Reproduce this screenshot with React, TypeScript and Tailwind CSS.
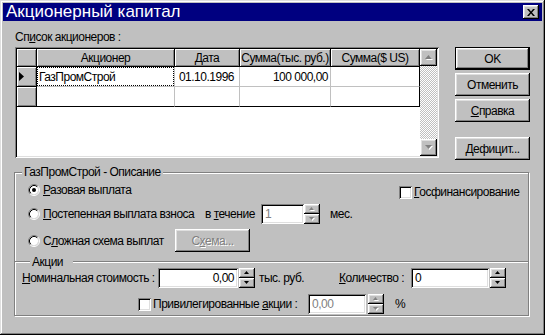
import React from 'react';

const raised =
  'shadow-[inset_-1px_-1px_0_#000,inset_1px_1px_0_#fff,inset_-2px_-2px_0_#808080,inset_2px_2px_0_#dfdfdf]';
const sunken =
  'shadow-[inset_1px_1px_0_#808080,inset_-1px_-1px_0_#fff,inset_2px_2px_0_#000,inset_-2px_-2px_0_#dfdfdf]';
const cellRaised = 'shadow-[inset_1px_1px_0_#fff,inset_-1px_-1px_0_#808080]';
const etched = 'h-[2px] border-y border-t-[#808080] border-b-white';
const grayText = 'text-[#808080] [text-shadow:1px_1px_0_#fff]';

const Arrow = ({ up, disabled, w = 5, h = 3 }: { up?: boolean; disabled?: boolean; w?: number; h?: number }) => {
  const pts = (dx: number, dy: number) =>
    up
      ? `${dx},${h + dy} ${w + dx},${h + dy} ${w / 2 + dx},${dy}`
      : `${dx},${dy} ${w + dx},${dy} ${w / 2 + dx},${h + dy}`;
  return (
    <svg width={w + 1} height={h + 1} viewBox={`0 0 ${w + 1} ${h + 1}`} className="block">
      {disabled && <polygon points={pts(1, 1)} fill="#fff" />}
      <polygon points={pts(0, 0)} fill={disabled ? '#808080' : '#000'} />
    </svg>
  );
};

const Radio = ({ checked }: { checked?: boolean }) => (
  <svg width="12" height="12" viewBox="0 0 12 12" className="shrink-0">
    <circle cx="6" cy="6" r="4.2" fill="#fff" />
    <path d="M2.11 9.89 A5.5 5.5 0 0 1 9.89 2.11" stroke="#808080" fill="none" />
    <path d="M9.89 2.11 A5.5 5.5 0 0 1 2.11 9.89" stroke="#fff" fill="none" />
    <path d="M2.82 9.18 A4.5 4.5 0 0 1 9.18 2.82" stroke="#000" fill="none" />
    <path d="M9.18 2.82 A4.5 4.5 0 0 1 2.82 9.18" stroke="#dfdfdf" fill="none" />
    {checked && <circle cx="6" cy="6" r="2" fill="#000" />}
  </svg>
);

const Check = () => <div className={`w-[13px] h-[13px] shrink-0 bg-white ${sunken}`} />;

const Spin = ({ disabled, className = '' }: { disabled?: boolean; className?: string }) => (
  <div className={`w-[16px] h-[20px] flex flex-col shrink-0 ${className}`}>
    <div className={`h-[10px] bg-[#c0c0c0] flex items-center justify-center ${raised}`}>
      <Arrow up disabled={disabled} />
    </div>
    <div className={`h-[10px] bg-[#c0c0c0] flex items-center justify-center ${raised}`}>
      <Arrow disabled={disabled} />
    </div>
  </div>
);

const Edit = ({ value, className, right, disabled }: { value: string; className: string; right?: boolean; disabled?: boolean }) => (
  <div
    className={`${className} h-[20px] shrink-0 bg-white flex items-center px-[4px] ${sunken} ${right ? 'justify-end' : ''} ${
      disabled ? 'text-[#808080]' : ''
    }`}
  >
    {value}
  </div>
);

const Button = ({ children, isDefault, disabled, className = '' }: { children: React.ReactNode; isDefault?: boolean; disabled?: boolean; className?: string }) => (
  <div
    className={`w-[75px] h-[23px] flex items-center justify-center bg-[#c0c0c0] ${raised} ${
      isDefault ? 'border border-black' : ''
    } ${disabled ? grayText : ''} ${className}`}
  >
    <span>{children}</span>
  </div>
);

const cols = ['w-[138px]', 'w-[65px]', 'w-[91px]', 'w-[89px]'];
const headers = ['Акционер', 'Дата', 'Сумма(тыс. руб.)', 'Сумма($ US)'];

const Grid = () => (
  <div className={`mt-[3px] h-[111px] p-[2px] bg-white flex ${sunken}`}>
    <div className="w-[403px] flex flex-col">
      {/* header */}
      <div className="flex h-[18px]">
        <div className={`w-[20px] bg-[#c0c0c0] border-r border-b border-black ${cellRaised}`} />
        {headers.map((h, i) => (
          <div
            key={h}
            className={`${cols[i]} bg-[#c0c0c0] border-r border-b border-black flex items-center justify-center whitespace-nowrap overflow-hidden ${cellRaised}`}
          >
            {h}
          </div>
        ))}
      </div>
      {/* row 1 */}
      <div className="flex h-[20px]">
        <div className={`w-[20px] bg-[#c0c0c0] border-r border-b border-black flex items-center pl-[2px] ${cellRaised}`}>
          <svg width="5" height="9" viewBox="0 0 5 9">
            <polygon points="0,0 5,4.5 0,9" fill="#000" />
          </svg>
        </div>
        <div className="w-[138px] border-r border-b border-[#c0c0c0]">
          <div className="h-full border border-dotted border-black flex items-center pl-[1px]">ГазПромСтрой</div>
        </div>
        <div className="w-[65px] border-r border-b border-[#c0c0c0] flex items-center justify-end pr-[5px]">01.10.1996</div>
        <div className="w-[91px] border-r border-b border-[#c0c0c0] flex items-center justify-end pr-[2px]">100 000,00</div>
        <div className="w-[89px] border-r border-b border-[#c0c0c0] border-r-black" />
      </div>
      {/* row 2 */}
      <div className="flex h-[20px]">
        <div className={`w-[20px] bg-[#c0c0c0] border-r border-b border-black ${cellRaised}`} />
        <div className="w-[138px] border-r border-b border-[#c0c0c0] border-b-black" />
        <div className="w-[65px] border-r border-b border-[#c0c0c0] border-b-black" />
        <div className="w-[91px] border-r border-b border-[#c0c0c0] border-b-black" />
        <div className="w-[89px] border-r border-b border-black" />
      </div>
    </div>
    {/* scrollbar */}
    <div className="w-[17px] flex flex-col">
      <div className={`h-[17px] bg-[#c0c0c0] flex items-center justify-center ${raised}`}>
        <Arrow up disabled w={7} h={4} />
      </div>
      <div className="flex-1 bg-[repeating-conic-gradient(#c0c0c0_0_25%,#fff_0_50%)] bg-[length:2px_2px]" />
      <div className={`h-[17px] bg-[#c0c0c0] flex items-center justify-center ${raised}`}>
        <Arrow disabled w={7} h={4} />
      </div>
    </div>
  </div>
);

export default function App() {
  return (
    <div
      className={`w-[545px] h-[335px] bg-[#c0c0c0] p-[3px] flex flex-col font-['Liberation_Sans',Arial,sans-serif] text-[12px] leading-[14px] tracking-[-0.5px] text-black shadow-[inset_-1px_-1px_0_#000,inset_1px_1px_0_#dfdfdf,inset_-2px_-2px_0_#808080,inset_2px_2px_0_#fff]`}
    >
      {/* title bar */}
      <div className="h-[18px] bg-[#000080] flex items-center justify-between">
        <span className="pl-[3px] text-[17px] leading-[18px] tracking-normal text-white">Акционерный капитал</span>
        <div className={`w-[16px] h-[14px] mr-[3px] bg-[#c0c0c0] flex items-center justify-center ${raised}`}>
          <svg width="8" height="7" viewBox="0 0 8 7">
            <path d="M0 0h2l2 2.5L6 0h2L5 3.5 8 7H6L4 4.5 2 7H0l3-3.5z" fill="#000" />
          </svg>
        </div>
      </div>

      <div className="flex-1 pl-[11px] pt-[9px]">
        {/* shareholders list + buttons */}
        <div className="flex pl-[1px]">
          <div className="w-[424px] flex flex-col">
            <div>
              Сп<u>и</u>сок акционеров :
            </div>
            <Grid />
          </div>
          <div className="ml-[16px] mt-[17px] flex flex-col">
            <Button isDefault>OK</Button>
            <Button className="mt-[3px]">Отменить</Button>
            <Button className="mt-[3px]">
              <u>С</u>правка
            </Button>
            <Button className="mt-[15px]">
              <u>Д</u>ефицит...
            </Button>
          </div>
        </div>

        {/* description group */}
        <div className="relative mt-[12px] w-[515px] border border-[#808080] pb-[1px] shadow-[inset_1px_1px_0_#fff,1px_1px_0_#fff]">
          <span className="absolute -top-[8px] left-[7px] px-[2px] bg-[#c0c0c0]">ГазПромСтрой - Описание</span>

          <div className="mt-[10px] h-[14px] flex items-center">
            <div className="w-[384px] pl-[13px] flex items-center">
              <Radio checked />
              <span className="ml-[3px]">
                <u>Р</u>азовая выплата
              </span>
            </div>
            <div className="flex items-center translate-y-[2px]">
              <Check />
              <span className="ml-[2px]">
                <u>Г</u>осфинансирование
              </span>
            </div>
          </div>

          <div className="mt-[7px] h-[20px] flex items-center">
            <div className="w-[190px] pl-[13px] flex items-center">
              <Radio />
              <span className="ml-[3px]">
                <u>П</u>остепенная выплата взноса
              </span>
            </div>
            <div className="w-[56px]">
              в <u>т</u>ечение
            </div>
            <Edit value="1" className="w-[43px]" disabled />
            <Spin disabled />
            <span className="ml-[10px]">мес.</span>
          </div>

          <div className="mt-[5px] h-[23px] flex items-center">
            <div className="w-[160px] pl-[13px] flex items-center">
              <Radio />
              <span className="ml-[3px]">
                С<u>л</u>ожная схема выплат
              </span>
            </div>
            <Button disabled>
              С<u>х</u>ема...
            </Button>
          </div>

          {/* shares subgroup */}
          <div className="mt-[4px] h-[12px] flex items-center">
            <div className={`w-[15px] ${etched}`} />
            <span className="pl-[2px] pr-[10px]">Акции</span>
            <div className={`flex-1 ${etched}`} />
          </div>

          <div className="h-[20px] flex items-center">
            <div className="w-[143px] pl-[7px] whitespace-nowrap">
              <u>Н</u>оминальная стоимость :
            </div>
            <Edit value="0,00" className="w-[80px]" right />
            <Spin className="ml-[1px]" />
            <div className="ml-[4px] w-[80px]">тыс. руб.</div>
            <div className="w-[72px]">
              <u>К</u>оличество :
            </div>
            <Edit value="0" className="w-[78px]" />
            <Spin className="ml-[1px]" />
          </div>

          <div className="mt-[6px] h-[20px] flex items-center pl-[123px]">
            <Check />
            <div className="ml-[2px] w-[155px] whitespace-nowrap">
              Привилегированные <u>а</u>кции :
            </div>
            <Edit value="0,00" className="w-[58px]" disabled />
            <Spin className="ml-[2px]" disabled />
            <span className="ml-[11px]">%</span>
          </div>
        </div>
      </div>
    </div>
  );
}
